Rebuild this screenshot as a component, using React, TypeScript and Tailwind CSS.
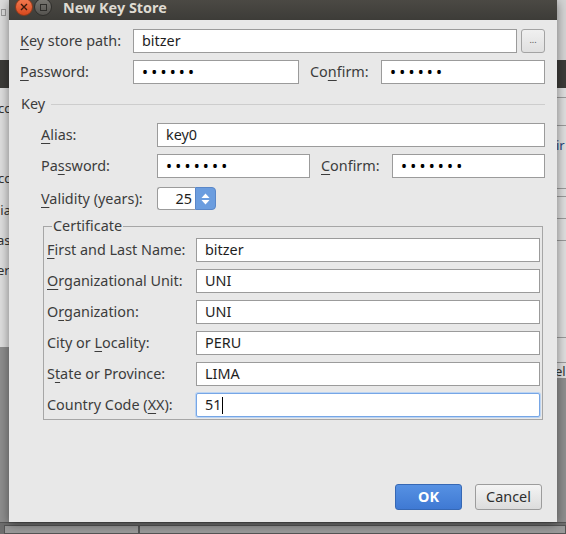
import React from "react"

// mnemonic letter (underlined), as in GTK dialog labels
function M({ c }: { c: string }) {
    return <span className="underline underline-offset-[3px] decoration-1">{c}</span>
}

function Field({ value, className = "", dots = false }: { value: string; className?: string; dots?: boolean }) {
    return (
        <div className={`h-6 bg-white border border-[#9b9b9b] flex items-center px-[8px] ${className}`}>
            {dots ? (
                <span className="text-[16px] tracking-[3.2px] text-black leading-none">{value}</span>
            ) : (
                <span className="text-[#1e1e1e]">{value}</span>
            )}
        </div>
    )
}

const certRows: { label: React.ReactNode; value: string }[] = [
    { label: <><M c="F" />irst and Last Name:</>, value: "bitzer" },
    { label: <><M c="O" />rganizational Unit:</>, value: "UNI" },
    { label: <>O<M c="r" />ganization:</>, value: "UNI" },
    { label: <>City or <M c="L" />ocality:</>, value: "PERU" },
    { label: <>S<M c="t" />ate or Province:</>, value: "LIMA" },
]

// the window behind the dialog, seen at its edges
function Backdrop() {
    return (
        <div className="absolute inset-0 flex flex-col text-[13px]">
            <div className="flex-1 flex justify-between">
                <div className="w-[9px] flex flex-col overflow-hidden">
                    <div className="h-[60px] bg-[#dcdcdc] pt-[9px]"><div className="w-[5px] h-[7px] border border-[#999] ml-[1px]" /></div>
                    <div className="h-[28px] bg-[#3c3b38]" />
                    <div className="h-[259px] bg-[#dedede] flex flex-col pt-[12px] leading-[16px] text-[#333]">
                        <span className="-ml-[2px]">cc</span>
                        <span className="mt-[54px] -ml-[2px]">cc</span>
                        <span className="mt-[16px] -ml-[3px]">lia</span>
                        <span className="mt-[14px] -ml-[3px]">as</span>
                        <span className="mt-[14px] -ml-[3px]">er</span>
                    </div>
                    <div className="flex-1 bg-[#8e8e8e]" />
                </div>
                <div className="w-[9px] flex flex-col overflow-hidden">
                    <div className="h-[60px] bg-[#d4d4d4]" />
                    <div className="h-[28px] bg-[#3c3b38]" />
                    <div className="h-[290px] shrink-0 overflow-hidden bg-[#dedede] flex flex-col text-[#333] leading-[16px]">
                        <div className="h-[10px] shrink-0 border-b border-[#9a9a9a]" />
                        <div className="h-[28px] shrink-0 border-b border-[#9a9a9a]" />
                        <div className="h-[63px] shrink-0 border-b border-[#9a9a9a] pt-[11px]"><span className="-ml-[1px] text-[#24437a]">ir</span></div>
                        <div className="h-[8px] shrink-0 border-b border-[#9a9a9a]" />
                        <div className="h-[22px] shrink-0 border-b border-[#9a9a9a]" />
                        <div className="h-[22px] shrink-0 border-b border-[#9a9a9a]" />
                        <div className="h-[97px] shrink-0 border-b border-[#9a9a9a]" />
                        <div className="h-[25px] shrink-0 border-b border-[#9a9a9a]" />
                        <div className="h-[16px] shrink-0"><span className="-ml-[2px]">el</span></div>
                    </div>
                    <div className="flex-1 bg-[#8e8e8e]" />
                </div>
            </div>
            <div className="h-[12px] bg-[#6e6e6e] border-t border-[#555] flex">
                <div className="w-[135px] border border-[#555] bg-[#9a9a9a] mt-[2px] ml-[4px]" />
                <div className="flex-1 border border-[#555] bg-[#9a9a9a] mt-[2px]" />
            </div>
        </div>
    )
}

export default function App() {
    return (
        <div className="relative w-[566px] h-[534px] overflow-hidden font-['Noto_Sans',sans-serif] text-[14.4px] text-[#3c3c3c]">
            <Backdrop />

            {/* dialog window */}
            <div className="absolute left-[9px] top-0 w-[548px] h-[522px] flex flex-col shadow-[0_2px_10px_rgba(0,0,0,0.45)]">
                {/* title bar */}
                <div className="h-[20px] bg-gradient-to-b from-[#4b4944] to-[#3d3c38] flex items-start relative">
                    <div className="absolute left-[6px] -top-[2px] w-[18px] h-[18px] rounded-full bg-gradient-to-b from-[#f37a4f] to-[#d9481c] border border-[#8a3a1c] flex items-center justify-center">
                        <svg width="8" height="8" viewBox="0 0 8 8"><path d="M1 1 L7 7 M7 1 L1 7" stroke="#3a1a0c" strokeWidth="1.4" /></svg>
                    </div>
                    <div className="absolute left-[25px] -top-[2px] w-[18px] h-[18px] rounded-full bg-gradient-to-b from-[#7b7974] to-[#55534f] border border-[#2f2e2b] flex items-center justify-center">
                        <div className="w-[7px] h-[7px] border border-[#2e2d2a]" />
                    </div>
                    <div className="ml-[54px] -mt-[3px] text-[14.4px] font-bold text-[#dfdbd2]">New Key Store</div>
                </div>

                {/* body */}
                <div className="flex-1 bg-[#e8e8e8] flex flex-col pl-[11px] pr-[12px] pt-[9px] pb-[12px]">
                    <div className="flex items-center h-6">
                        <div className="w-[113px]"><M c="K" />ey store path:</div>
                        <Field value="bitzer" className="flex-1" />
                        <div className="ml-[4px] w-6 h-6 rounded-[3px] border border-[#a3a3a3] bg-gradient-to-b from-[#f0f0f0] to-[#e0e0e0] flex items-center justify-center text-[9px] text-[#555] pb-[3px]">...</div>
                    </div>
                    <div className="flex items-center h-6 mt-[7px]">
                        <div className="w-[113px]"><M c="P" />assword:</div>
                        <Field value="••••••" dots className="w-[166px]" />
                        <div className="ml-[11px] w-[71px]">Co<M c="n" />firm:</div>
                        <Field value="••••••" dots className="flex-1" />
                    </div>

                    <div className="flex items-center h-4 mt-[12px]">
                        <span className="ml-[1px]">Key</span>
                        <div className="flex-1 h-px bg-[#cdcdcd] ml-[6px]" />
                    </div>

                    <div className="pl-[21px] flex flex-col">
                        <div className="flex items-center h-6 mt-[11px]">
                            <div className="w-[116px]"><M c="A" />lias:</div>
                            <Field value="key0" className="flex-1" />
                        </div>
                        <div className="flex items-center h-6 mt-[7px]">
                            <div className="w-[116px]">Pa<M c="s" />sword:</div>
                            <Field value="•••••••" dots className="w-[153px]" />
                            <div className="ml-[11px] w-[71px]"><M c="C" />onfirm:</div>
                            <Field value="•••••••" dots className="flex-1" />
                        </div>
                        <div className="flex items-center h-[23px] mt-[9px]">
                            <div className="w-[116px]"><M c="V" />alidity (years):</div>
                            <div className="flex h-[23px] w-[59px]">
                                <div className="flex-1 bg-white border border-r-0 border-[#9b9b9b] rounded-l-[3px] flex items-center justify-end pr-[3px] text-[#1e1e1e]">25</div>
                                <div className="w-[21px] rounded-r-[4px] bg-[#6b9ddf] border border-[#5a87c8] flex flex-col items-center justify-center gap-[2px]">
                                    <svg width="9" height="5" viewBox="0 0 9 5"><path d="M0.5 5 L4.5 0.5 L8.5 5 Z" fill="#fff" /></svg>
                                    <svg width="9" height="5" viewBox="0 0 9 5"><path d="M0.5 0 L4.5 4.5 L8.5 0 Z" fill="#fff" /></svg>
                                </div>
                            </div>
                        </div>

                        <fieldset className="ml-[2px] mr-[2px] mt-[7px] border border-[#a6a6a6] pl-[3px] pr-[2px] pb-[2px] flex flex-col gap-[7px]">
                            <legend className="ml-[5px] px-[1px] leading-[18px]">Certificate</legend>
                            {certRows.map((r, i) => (
                                <div key={i} className={`flex items-center h-6 ${i === 0 ? "mt-[3px]" : ""}`}>
                                    <div className="w-[149px]">{r.label}</div>
                                    <Field value={r.value} className="flex-1" />
                                </div>
                            ))}
                            <div className="flex items-center h-6">
                                <div className="w-[149px]">Country Code (<M c="X" />X):</div>
                                <div className="flex-1 h-6 bg-white border border-[#76a6e6] rounded-[2px] shadow-[0_0_0_1px_#bcd4f2] flex items-center px-[8px] text-[#1e1e1e]">
                                    51<span className="w-px h-[17px] bg-black ml-[1px]" />
                                </div>
                            </div>
                        </fieldset>
                    </div>

                    <div className="mt-auto flex justify-end gap-[13px] mr-[3px]">
                        <div className="w-[67px] h-[26px] rounded-[3px] bg-gradient-to-b from-[#5691e3] to-[#3f79d3] border border-[#3668b4] flex items-center justify-center text-white font-bold">OK</div>
                        <div className="w-[67px] h-[26px] rounded-[3px] bg-gradient-to-b from-[#f4f4f4] to-[#dcdcdc] border border-[#9c9c9c] flex items-center justify-center text-[#2e2e2e]">Cancel</div>
                    </div>
                </div>
            </div>
        </div>
    )
}
